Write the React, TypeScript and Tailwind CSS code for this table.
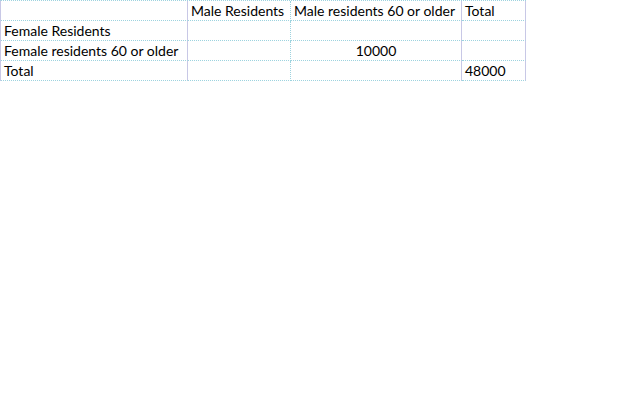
import React from "react";

function Cell({
  children,
  center,
  solid,
}: {
  children?: React.ReactNode;
  center?: boolean;
  solid?: boolean;
}) {
  return (
    <div
      className={`h-[20px] [border-bottom:1px_dotted_#9dd3df] ${
        solid ? "[border-right:1px_solid_#c8c8e6]" : "[border-right:1px_dotted_#9dd3df]"
      } flex items-end pb-[1px] ${
        center ? "justify-center" : "pl-[3px]"
      } whitespace-nowrap`}
    >
      {children}
    </div>
  );
}

export default function App() {
  const rows: [string, string, string, string][] = [
    ["", "Male Residents", "Male residents 60 or older", "Total"],
    ["Female Residents", "", "", ""],
    ["Female residents 60 or older", "", "10000", ""],
    ["Total", "", "", "48000"],
  ];
  return (
    <div className="w-[640px] h-[400px] bg-white text-black font-['Lato',sans-serif] text-[14px] leading-[16px]">
      <div className="grid grid-cols-[187px_103px_171px_64px] w-[526px] [border-top:1px_dotted_#9dd3df] [border-left:1px_solid_#c8c8e6]">
        {rows.map((r, i) =>
          r.map((c, j) => (
            <Cell
              key={`${i}-${j}`}
              solid={j === 0 || j === 2 || j === 3}
              center={i === 2 && j === 2}
            >
              {c}
            </Cell>
          ))
        )}
      </div>
    </div>
  );
}
